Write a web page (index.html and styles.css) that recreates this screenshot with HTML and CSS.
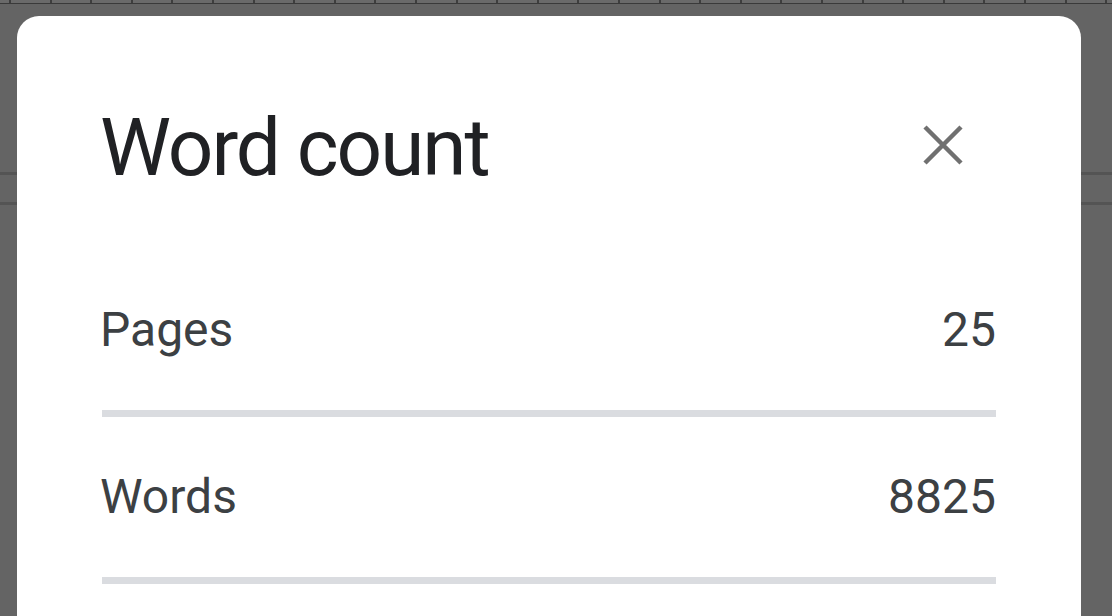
FILE: index.html
```html
<!DOCTYPE html>
<html>
<head>
    <meta charset="utf-8">
    <title>Word count</title>
    <link rel="stylesheet" href="styles.css">
</head>
<body>

<div class="ruler"></div>

<div class="dialog">
    <div class="dialog_header">
        <h1 class="dialog_title">Word count</h1>
        <button type="button" class="close_btn" aria-label="Close">
            <svg width="40" height="40" viewBox="0 0 40 40">
                <path d="M2 2 L38 38 M38 2 L2 38" stroke="#707070" stroke-width="4.5" fill="none"/>
            </svg>
        </button>
    </div>

    <div class="count_row">
        <span class="count_label">Pages</span>
        <span class="count_value">25</span>
    </div>
    <div class="count_row">
        <span class="count_label">Words</span>
        <span class="count_value">8825</span>
    </div>
</div>

</body>
</html>
```

FILE: styles.css
```css
html, body {
    height: 100%;
}

body {
    margin: 0;
    overflow: hidden;
    background-color: #646464;
    /* the page edges showing behind the dialog */
    background-image: linear-gradient(to bottom,
        transparent 172px, #545454 172px, #545454 175px, transparent 175px,
        transparent 202px, #545454 202px, #545454 205px, transparent 205px);
    font-family: Roboto, "Liberation Sans", sans-serif;
}

.ruler {
    height: 3px;
    border-bottom: 1px solid #3a3a3a;
    background-color: #6a6a6a;
    background-image: repeating-linear-gradient(90deg,
        transparent 0px, transparent 9px, #3e3e3e 9px, #3e3e3e 11px, transparent 11px, transparent 40.6px);
}

.dialog {
    margin: 12px 0 0 17px;
    width: 1064px;
    height: 600px;
    box-sizing: border-box;
    padding: 92px 85px 0 85px;
    background: #ffffff;
    border-radius: 22px 22px 0 0;
}

.dialog_header {
    display: flex;
    align-items: center;
    justify-content: space-between;
    margin-bottom: 62px;
}

.dialog_title {
    margin: 0 0 0 -2px;
    font-size: 80px;
    line-height: 80px;
    font-weight: 400;
    color: #202124;
    letter-spacing: -2px;
}

.close_btn {
    width: 72px;
    height: 72px;
    margin: 0 17px 6px 0;
    padding: 0;
    border: none;
    background: transparent;
    display: flex;
    align-items: center;
    justify-content: center;
}

.count_row {
    display: flex;
    justify-content: space-between;
    padding: 56px 0;
    border-bottom: 7px solid #dadce0;
    font-size: 48px;
    line-height: 48px;
    color: #3c4043;
}

.count_label {
    margin-left: -2px;
}
```
